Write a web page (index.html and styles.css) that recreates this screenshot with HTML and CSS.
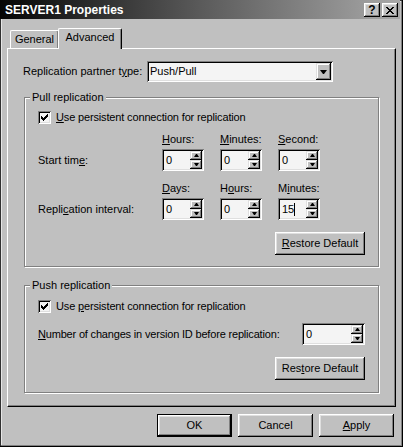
FILE: index.html
```html
<!DOCTYPE html>
<html>
<head>
<meta charset="utf-8">
<title>SERVER1 Properties</title>
<link rel="stylesheet" href="styles.css">
</head>
<body>
<div class="window">
  <div class="titlebar">
    <span class="title">SERVER1 Properties</span>
    <div class="caption-buttons">
      <span class="cbtn help">?</span>
      <span class="cbtn close"><svg width="8" height="7" viewBox="0 0 8 7"><path d="M0 0h2v1H0zM6 0h2v1H6zM1 1h2v1H1zM5 1h2v1H5zM2 2h4v1H2zM3 3h2v1H3zM2 4h4v1H2zM1 5h2v1H1zM5 5h2v1H5zM0 6h2v1H0zM6 6h2v1H6z" fill="#000"/></svg></span>
    </div>
  </div>
  <div class="client">
    <div class="tabs">
      <div class="tab">General</div>
      <div class="tab active">Advanced</div>
    </div>
    <div class="panel">
      <div class="partner">
        <span class="partner-label">Replication partner t<u>y</u>pe:</span>
        <div class="combo">
          <span class="combo-text">Push/Pull</span>
          <span class="dropbtn"><i class="arrow-down"></i></span>
        </div>
      </div>

      <fieldset class="group pull">
        <legend>Pull replication</legend>
        <div class="group-body">
          <div class="check-row">
            <span class="checkbox"><svg width="13" height="13" viewBox="0 0 13 13"><path d="M3 5h1v3H3zM4 6h1v3H4zM5 7h1v3H5zM6 6h1v3H6zM7 5h1v3H7zM8 4h1v3H8zM9 3h1v3H9z" fill="#000"/></svg></span>
            <span class="check-label"><u>U</u>se persistent connection for replication</span>
          </div>

          <div class="tgrid">
            <span></span>
            <span class="cap"><u>H</u>ours:</span>
            <span class="cap"><u>M</u>inutes:</span>
            <span class="cap"><u>S</u>econd:</span>
            <span class="rowlbl">Start tim<u>e</u>:</span>
            <div class="spin"><span class="spin-text">0</span><span class="spin-btns"><span class="sbtn"><i class="tri-up"></i></span><span class="sbtn"><i class="tri-down"></i></span></span></div>
            <div class="spin"><span class="spin-text">0</span><span class="spin-btns"><span class="sbtn"><i class="tri-up"></i></span><span class="sbtn"><i class="tri-down"></i></span></span></div>
            <div class="spin"><span class="spin-text">0</span><span class="spin-btns"><span class="sbtn"><i class="tri-up"></i></span><span class="sbtn"><i class="tri-down"></i></span></span></div>
          </div>

          <div class="tgrid second">
            <span></span>
            <span class="cap"><u>D</u>ays:</span>
            <span class="cap">H<u>o</u>urs:</span>
            <span class="cap">M<u>i</u>nutes:</span>
            <span class="rowlbl">Repli<u>c</u>ation interval:</span>
            <div class="spin"><span class="spin-text">0</span><span class="spin-btns"><span class="sbtn"><i class="tri-up"></i></span><span class="sbtn"><i class="tri-down"></i></span></span></div>
            <div class="spin"><span class="spin-text">0</span><span class="spin-btns"><span class="sbtn"><i class="tri-up"></i></span><span class="sbtn"><i class="tri-down"></i></span></span></div>
            <div class="spin"><span class="spin-text">15<i class="caret"></i></span><span class="spin-btns"><span class="sbtn"><i class="tri-up"></i></span><span class="sbtn"><i class="tri-down"></i></span></span></div>
          </div>

          <div class="restore-row">
            <span class="btn wide"><u>R</u>estore Default</span>
          </div>
        </div>
      </fieldset>

      <fieldset class="group push">
        <legend>Push replication</legend>
        <div class="group-body">
          <div class="check-row">
            <span class="checkbox"><svg width="13" height="13" viewBox="0 0 13 13"><path d="M3 5h1v3H3zM4 6h1v3H4zM5 7h1v3H5zM6 6h1v3H6zM7 5h1v3H7zM8 4h1v3H8zM9 3h1v3H9z" fill="#000"/></svg></span>
            <span class="check-label">Use <u>p</u>ersistent connection for replication</span>
          </div>
          <div class="numrow">
            <span class="numlabel"><u>N</u>umber of changes in version ID before replication:</span>
            <div class="spin long"><span class="spin-text">0</span><span class="spin-btns"><span class="sbtn"><i class="tri-up"></i></span><span class="sbtn"><i class="tri-down"></i></span></span></div>
          </div>
          <div class="restore-row">
            <span class="btn wide">Res<u>t</u>ore Default</span>
          </div>
        </div>
      </fieldset>
    </div>

    <div class="buttons">
      <span class="btn default">OK</span>
      <span class="btn">Cancel</span>
      <span class="btn"><u>A</u>pply</span>
    </div>
  </div>
</div>
</body>
</html>
```

FILE: styles.css
```css
* { box-sizing: border-box; }
html, body { margin: 0; padding: 0; }
body {
  background: #c0c0c0;
  font-family: "Liberation Sans", Arial, sans-serif;
  font-size: 11px;
  line-height: 13px;
  color: #000;
}
u { text-decoration: underline; text-underline-offset: 1px; }

.window {
  width: 403px;
  height: 447px;
  background: #c0c0c0;
  padding: 0 3px 3px 0;
  display: flex;
  flex-direction: column;
  box-shadow: inset -1px -1px #000, inset 1px 1px #303030, inset -2px -2px #808080, inset 2px 2px #e6e6e6;
}

.titlebar {
  height: 19px;
  flex: none;
  display: flex;
  align-items: center;
  justify-content: space-between;
  padding: 0 2px 0 5px;
  background: linear-gradient(90deg, #050505 0%, #5a5a5a 50%, #a8a8a8 100%);
}
.title {
  color: #fff;
  font-weight: bold;
  font-size: 12px;
  padding-top: 2px;
}
.caption-buttons {
  display: flex;
  gap: 2px;
  padding-top: 1px;
}
.cbtn {
  width: 16px;
  height: 14px;
  display: flex;
  align-items: center;
  justify-content: center;
  background: #c0c0c0;
  font-weight: bold;
  font-size: 12px;
  box-shadow: inset -1px -1px #000, inset 1px 1px #fff, inset -2px -2px #808080, inset 2px 2px #dfdfdf;
}
.cbtn.close svg { display: block; }

.client {
  flex: 1;
  display: flex;
  flex-direction: column;
  padding: 9px 0 0 7px;
}

.tabs {
  display: flex;
  align-items: flex-end;
  height: 20px;
  padding-left: 3px;
}
.tab {
  height: 18px;
  width: 49px;
  border-left: 1px solid #fff;
  border-top: 1px solid #fff;
  border-right: 1px solid #000;
  border-radius: 2px 2px 0 0;
  box-shadow: inset -1px 0 #808080;
  text-align: center;
  padding-top: 2px;
  background: #c0c0c0;
}
.tab.active {
  height: 21px;
  width: 64px;
  margin-left: -1px;
  margin-bottom: -1px;
  position: relative;
  z-index: 1;
}

.panel {
  width: 389px;
  height: 359px;
  border-top: 1px solid #fff;
  border-left: 1px solid #fff;
  border-right: 1px solid #000;
  border-bottom: 1px solid #000;
  box-shadow: inset -1px -1px #808080;
  padding: 12px 0 0 15px;
}

.partner {
  display: flex;
  align-items: center;
  height: 21px;
}
.partner-label { width: 124px; flex: none; }
.combo {
  width: 186px;
  height: 21px;
  display: flex;
  align-items: center;
  padding: 2px;
  background: #f4f4f4;
  box-shadow: inset 1px 1px #808080, inset -1px -1px #fff, inset 2px 2px #000, inset -2px -2px #dfdfdf;
}
.combo-text { flex: 1; padding-left: 1px; }
.dropbtn {
  width: 15px;
  height: 17px;
  display: flex;
  align-items: center;
  justify-content: center;
  background: #c0c0c0;
  box-shadow: inset -1px -1px #000, inset 1px 1px #dfdfdf, inset -2px -2px #808080, inset 2px 2px #fff;
}
.arrow-down {
  display: block;
  width: 1px;
  height: 0;
  border-left: 3px solid transparent;
  border-right: 3px solid transparent;
  border-top: 4px solid #000;
  box-sizing: content-box;
}

.group {
  margin: 9px 0 0 1px;
  padding: 0;
  width: 355px;
  min-inline-size: 0;
  border: 1px solid #808080;
  box-shadow: inset 1px 1px #fff, 1px 1px #fff;
}
.group.push { margin-top: 12px; }
.group legend {
  margin-left: 5px;
  padding: 0 2px;
  background: #c0c0c0;
  line-height: 13px;
}
.group-body { padding: 7px 13px 11px 13px; }
.push .group-body { padding: 8px 13px 12px 13px; }

.check-row {
  display: flex;
  align-items: center;
  height: 13px;
}
.checkbox {
  width: 13px;
  height: 13px;
  flex: none;
  background: #f4f4f4;
  box-shadow: inset 1px 1px #808080, inset -1px -1px #fff, inset 2px 2px #000, inset -2px -2px #dfdfdf;
}
.checkbox svg { display: block; }
.check-label { margin-left: 5px; letter-spacing: -0.15px; }

.tgrid {
  display: grid;
  grid-template-columns: 124px 58px 58px 42px;
  grid-template-rows: 16px 22px;
  margin-top: 9px;
}
.tgrid.second { margin-top: 11px; }
.cap { align-self: start; }
.rowlbl { align-self: center; }

.spin {
  width: 42px;
  height: 22px;
  display: flex;
  padding: 2px;
  background: #f4f4f4;
  box-shadow: inset 1px 1px #808080, inset -1px -1px #fff, inset 2px 2px #000, inset -2px -2px #dfdfdf;
}
.spin.long { width: 63px; }
.spin-text {
  flex: 1;
  padding-left: 2px;
  line-height: 18px;
  display: flex;
  align-items: center;
}
.caret {
  display: block;
  width: 1px;
  height: 13px;
  background: #000;
}
.spin-btns {
  width: 12px;
  display: flex;
  flex-direction: column;
}
.sbtn {
  height: 9px;
  display: flex;
  align-items: center;
  justify-content: center;
  background: #c0c0c0;
  box-shadow: inset -1px -1px #000, inset 1px 1px #dfdfdf, inset -2px -2px #808080, inset 2px 2px #fff;
}
.tri-up, .tri-down {
  display: block;
  width: 1px;
  height: 0;
  box-sizing: content-box;
  border-left: 2px solid transparent;
  border-right: 2px solid transparent;
}
.tri-up { border-bottom: 3px solid #000; }
.tri-down { border-top: 3px solid #000; }

.numrow {
  display: flex;
  align-items: center;
  justify-content: space-between;
  margin-top: 10px;
}
.numlabel { letter-spacing: -0.18px; }

.restore-row {
  display: flex;
  justify-content: flex-end;
  margin-top: 12px;
}

.btn {
  width: 75px;
  height: 23px;
  display: flex;
  align-items: center;
  justify-content: center;
  background: #c0c0c0;
  box-shadow: inset -1px -1px #000, inset 1px 1px #fff, inset -2px -2px #808080, inset 2px 2px #dfdfdf;
}
.btn.wide { width: 90px; }
.btn.default { border: 1px solid #000; }

.buttons {
  display: flex;
  justify-content: flex-end;
  gap: 6px;
  width: 389px;
  padding-right: 2px;
  margin-top: 7px;
}
```
